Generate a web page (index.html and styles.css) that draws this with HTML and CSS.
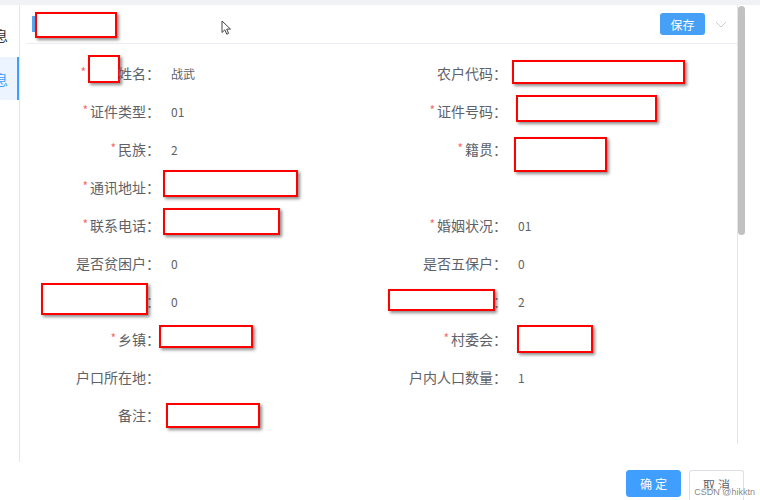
FILE: index.html
```html
<!DOCTYPE html>
<html lang="zh-CN">
<head>
<meta charset="utf-8">
<title>农户信息</title>
<link rel="stylesheet" href="styles.css">
</head>
<body>
<div class="app">
  <div class="strip"></div>
  <div class="main">
    <aside class="side">
      <div class="side-item"><span>基本信息</span></div>
      <div class="side-item active"><span>家庭信息</span></div>
    </aside>
    <section class="panel">
      <div class="content">
        <div class="head">
          <span class="head-bar"></span>
          <span class="rd r-head"></span>
          <span class="spacer"></span>
          <button class="btn-save">保存</button>
          <svg class="chev" width="12" height="8" viewBox="0 0 12 8"><polyline points="1,1 6,6 11,1" fill="none" stroke="#c8ccd3" stroke-width="1"/></svg>
        </div>
        <div class="form">
          <div class="field">
            <div class="label"><span class="req">*</span><span class="rd r-name"></span><span>姓名：</span></div>
            <div class="value"><span class="txt">战武</span></div>
          </div>
          <div class="field">
            <div class="label"><span>农户代码：</span></div>
            <div class="value"><span class="rd r-nhdm"></span></div>
          </div>

          <div class="field">
            <div class="label"><span class="req">*</span><span>证件类型：</span></div>
            <div class="value"><span class="txt">01</span></div>
          </div>
          <div class="field">
            <div class="label"><span class="req">*</span><span>证件号码：</span></div>
            <div class="value"><span class="rd r-zjhm"></span></div>
          </div>

          <div class="field">
            <div class="label"><span class="req">*</span><span>民族：</span></div>
            <div class="value"><span class="txt">2</span></div>
          </div>
          <div class="field">
            <div class="label"><span class="req">*</span><span>籍贯：</span></div>
            <div class="value"><span class="rd r-jg"></span></div>
          </div>

          <div class="field">
            <div class="label"><span class="req">*</span><span>通讯地址：</span></div>
            <div class="value"><span class="rd r-txdz"></span></div>
          </div>
          <div class="field"></div>

          <div class="field">
            <div class="label"><span class="req">*</span><span>联系电话：</span></div>
            <div class="value"><span class="rd r-lxdh"></span></div>
          </div>
          <div class="field">
            <div class="label"><span class="req">*</span><span>婚姻状况：</span></div>
            <div class="value"><span class="txt">01</span></div>
          </div>

          <div class="field">
            <div class="label"><span>是否贫困户：</span></div>
            <div class="value"><span class="txt">0</span></div>
          </div>
          <div class="field">
            <div class="label"><span>是否五保户：</span></div>
            <div class="value"><span class="txt">0</span></div>
          </div>

          <div class="field">
            <div class="label"><span class="rd r-l7"></span><span>：</span></div>
            <div class="value"><span class="txt">0</span></div>
          </div>
          <div class="field">
            <div class="label"><span class="rd r-r7"></span><span>：</span></div>
            <div class="value"><span class="txt">2</span></div>
          </div>

          <div class="field">
            <div class="label"><span class="req">*</span><span>乡镇：</span></div>
            <div class="value"><span class="rd r-xz"></span></div>
          </div>
          <div class="field">
            <div class="label"><span class="req">*</span><span>村委会：</span></div>
            <div class="value"><span class="rd r-cwh"></span></div>
          </div>

          <div class="field">
            <div class="label"><span>户口所在地：</span></div>
            <div class="value"></div>
          </div>
          <div class="field">
            <div class="label"><span>户内人口数量：</span></div>
            <div class="value"><span class="txt">1</span></div>
          </div>

          <div class="field">
            <div class="label"><span>备注：</span></div>
            <div class="value"><span class="rd r-bz"></span></div>
          </div>
          <div class="field"></div>
        </div>
      </div>
      <div class="scroll"><div class="thumb"></div></div>
      <div class="gutter"></div>
    </section>
  </div>
  <div class="foot">
    <button class="btn btn-primary">确定</button>
    <button class="btn btn-default">取消</button>
    <span class="watermark">CSDN @hikktn</span>
  </div>
  <svg class="cursor" width="12" height="16" viewBox="0 0 12 16"><path d="M1 1 L1 12.5 L3.8 9.8 L5.8 14.2 L7.6 13.4 L5.7 9.1 L9.5 9.1 Z" fill="#fff" stroke="#444" stroke-width="1" stroke-linejoin="round"/></svg>
</div>
</body>
</html>
```

FILE: styles.css
```css
html, body {
  margin: 0;
  padding: 0;
  overflow: hidden;
  background: #fff;
}
body {
  font-family: "Noto Sans CJK SC", "Noto Sans", "Liberation Sans", sans-serif;
  color: #606266;
}
.app {
  position: relative;
  width: 760px;
  height: 500px;
  overflow: hidden;
  display: flex;
  flex-direction: column;
}
.strip {
  height: 5px;
  background: #f0f2f5;
  flex: none;
}
.main {
  height: 457px;
  display: flex;
  flex: none;
}
.side {
  width: 19px;
  border-right: 1px solid #e6e6e6;
  padding-top: 8px;
  overflow: hidden;
  flex: none;
}
.side-item {
  height: 44px;
  display: flex;
  align-items: center;
  justify-content: flex-end;
  padding-right: 11px;
  font-size: 14px;
  color: #303133;
  white-space: nowrap;
}
.side-item.active {
  height: 43px;
  background: #ecf5ff;
  color: #409eff;
  box-shadow: inset -2px 0 0 #409eff;
}
.panel {
  flex: 1;
  display: flex;
}
.content {
  flex: 1;
  min-width: 0;
}
.head {
  height: 38px;
  margin-left: 6px;
  padding-left: 6px;
  padding-right: 10px;
  border-bottom: 1px solid #ebeef5;
  display: flex;
  align-items: center;
}
.head-bar {
  width: 3px;
  height: 16px;
  background: #5aa6ec;
  flex: none;
}
.spacer { flex: 1; }
.btn-save {
  width: 45px;
  height: 22px;
  border: none;
  border-radius: 3px;
  background: #46a1f6;
  color: #fff;
  font-family: inherit;
  font-size: 12px;
  padding: 0;
  margin-right: 10px;
}
.chev { display: block; margin-top: 2px; }

.form {
  padding-top: 10px;
  display: grid;
  grid-template-columns: 347px 1fr;
  grid-auto-rows: 38px;
}
.field {
  display: flex;
  align-items: center;
}
.label {
  width: 140px;
  flex: none;
  display: flex;
  align-items: center;
  justify-content: flex-end;
  font-size: 14px;
  color: #5e6168;
  white-space: nowrap;
}
.req {
  color: #f56c6c;
  font-size: 12px;
  margin-right: 2px;
  margin-top: -3px;
}
.value {
  flex: 1;
  display: flex;
  align-items: center;
  font-size: 12px;
  color: #606266;
}
.txt { padding-left: 11px; }

.rd {
  display: inline-block;
  box-sizing: border-box;
  border: 2px solid #ff0000;
  background: #fff;
  box-shadow: 2px 2px 3px rgba(0, 0, 0, 0.45);
  flex: none;
}
.r-head { width: 82px; height: 26px; margin-top: 2px; }
.r-name { width: 32px; height: 28px; margin-right: -2px; margin-bottom: 8px; }
.r-nhdm { width: 173px; height: 24px; margin-left: 5px; margin-bottom: 2px; }
.r-zjhm { width: 141px; height: 27px; margin-left: 9px; margin-bottom: 5px; }
.r-jg { width: 93px; height: 35px; margin-left: 7px; margin-top: 11px; }
.r-txdz { width: 135px; height: 27px; margin-left: 3px; margin-bottom: 7px; }
.r-lxdh { width: 117px; height: 27px; margin-left: 3px; margin-bottom: 7px; }
.r-l7 { width: 107px; height: 32px; margin-right: -2px; margin-bottom: 4px; }
.r-r7 { width: 107px; height: 22px; margin-right: -2px; margin-bottom: 2px; }
.r-xz { width: 94px; height: 23px; margin-left: -1px; margin-bottom: 5px; }
.r-cwh { width: 76px; height: 28px; margin-left: 10px; }
.r-bz { width: 94px; height: 25px; margin-left: 6px; }

.scroll {
  width: 7px;
  height: 438px;
  border-left: 1px solid #e4e4e4;
  padding-top: 1px;
  flex: none;
}
.thumb {
  width: 7px;
  height: 229px;
  background: #c1c1c1;
  border-radius: 4px;
}
.gutter {
  width: 15px;
  flex: none;
}

.foot {
  position: relative;
  box-sizing: border-box;
  height: 38px;
  flex: none;
  display: flex;
  justify-content: flex-end;
  align-items: flex-start;
  gap: 8px;
  padding: 8px 16px 0 0;
}
.btn {
  width: 55px;
  border-radius: 3px;
  font-family: inherit;
  font-size: 12px;
  letter-spacing: 3px;
  padding: 0 0 0 3px;
}
.btn-primary {
  height: 27px;
  background: #409eff;
  border: 1px solid #409eff;
  color: #fff;
}
.btn-default {
  align-self: stretch;
  padding-bottom: 3px;
  background: #fff;
  border: 1px solid #dcdfe6;
  border-bottom: none;
  border-radius: 3px 3px 0 0;
  color: #606266;
}
.watermark {
  position: absolute;
  right: 5px;
  bottom: 3px;
  font-family: "Liberation Sans", sans-serif;
  font-size: 9px;
  line-height: 9px;
  color: rgba(90, 90, 90, 0.75);
  background: rgba(255, 255, 255, 0.6);
}
.cursor {
  position: absolute;
  left: 221px;
  top: 20px;
}
```
